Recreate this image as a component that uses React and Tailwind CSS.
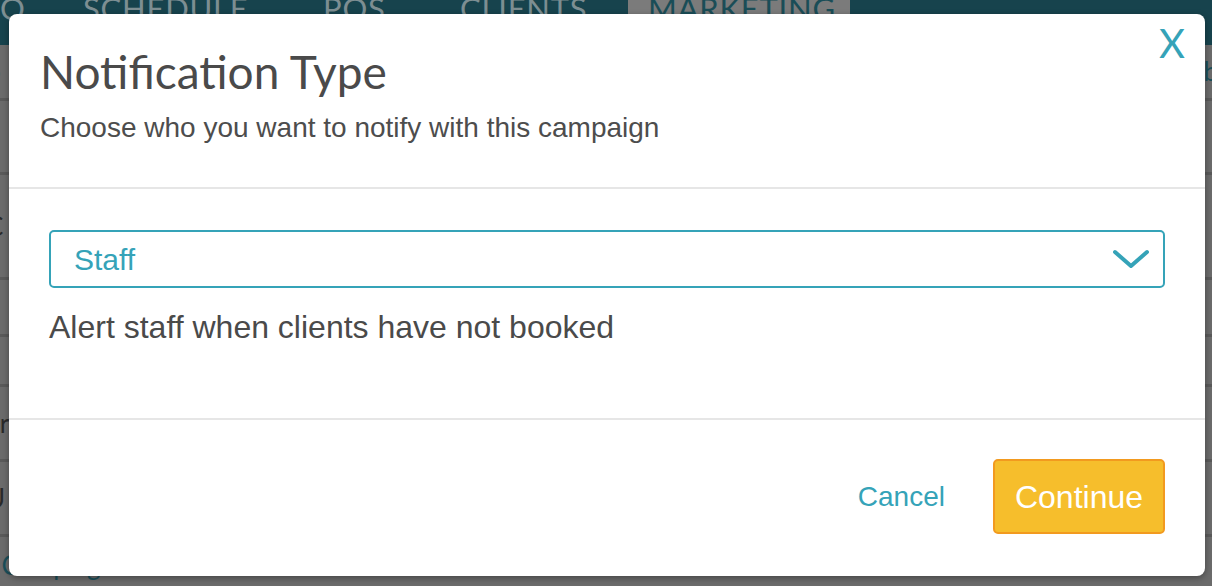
export default function App() {
  const rows = [
    { h: "h-[56px]", text: "o", cls: "text-[#1b4f5a]" },
    { h: "h-[74px]", text: "", cls: "" },
    { h: "h-[105px]", text: "C", cls: "text-[#2a2a2a]" },
    { h: "h-[57px]", text: "", cls: "" },
    { h: "h-[50px]", text: "", cls: "" },
    { h: "h-[75px]", text: "er", cls: "text-[#2a2a2a]" },
    { h: "h-[75px]", text: "U", cls: "text-[#2a2a2a]" },
    { h: "h-[60px]", text: "r Campaign", cls: "text-[#1b4f5a]" },
  ];

  return (
    <div className="relative h-[586px] w-[1212px] overflow-hidden bg-[#6b6b6b] font-['Liberation_Sans',Arial,sans-serif]">
      {/* page behind the dimmed overlay */}
      <div className="flex h-[45px] items-start bg-[#17434d]">
        <div className="-mt-[15px] flex items-start text-[31px] tracking-wide text-[#7d8e92] font-['Lato',sans-serif]">
          <span className="w-[83px] text-left">O</span>
          <span className="w-[240px]">SCHEDULE</span>
          <span className="w-[137px]">POS</span>
          <span className="w-[168px]">CLIENTS</span>
          <span className="h-[60px] w-[222px] bg-[#7b7b7b] px-[20px] text-[#1a4d57]">MARKETING</span>
        </div>
      </div>
      <div className="flex flex-col">
        {rows.map((r, i) => (
          <div
            key={i}
            className={`flex ${r.h} items-center justify-between border-b-[3px] border-[#5a5a5a] text-[26px] font-['Lato',sans-serif] ${r.cls}`}
          >
            <span className="-ml-[14px]">{r.text}</span>
            {i === 0 && <span className="-mr-[6px] text-[#1b4f5a]">b</span>}
          </div>
        ))}
      </div>

      {/* modal */}
      <div className="absolute left-[9px] top-[14px] flex h-[562px] w-[1196px] flex-col rounded-[8px] bg-white shadow-[0_2px_6px_rgba(0,0,0,0.35)]">
        <button className="absolute right-[20px] top-[9px] text-[40px] leading-none text-[#35a3b8] font-['Lato',sans-serif]">
          X
        </button>
        <div className="h-[175px] border-b-2 border-[#e6e6e6] px-[31px] pt-[30px]">
          <h1 className="text-[46px] leading-[56px] text-[#4a4a4a] font-['Lato',sans-serif]">
            Notification Type
          </h1>
          <p className="mt-[12px] text-[28px] leading-[32px] text-[#4d4d4d]">
            Choose who you want to notify with this campaign
          </p>
        </div>
        <div className="h-[231px] border-b-2 border-[#e6e6e6] px-[40px] pt-[41px]">
          <div className="flex h-[58px] items-center justify-between rounded-[5px] border-2 border-[#35a3b8] pl-[23px] pr-[13px]">
            <span className="text-[30px] text-[#35a3b8]">Staff</span>
            <svg width="38" height="22" viewBox="0 0 38 22" fill="none">
              <path d="M3 4 L19 18 L35 4" stroke="#35a3b8" strokeWidth="4" strokeLinecap="round" strokeLinejoin="round" />
            </svg>
          </div>
          <p className="mt-[20px] text-[32px] leading-[38px] text-[#4a4a4a]">
            Alert staff when clients have not booked
          </p>
        </div>
        <div className="flex flex-1 items-start justify-end gap-[48px] px-[40px] pt-[39px]">
          <button className="mt-[22px] text-[28px] leading-[32px] text-[#35a3b8]">Cancel</button>
          <button className="flex h-[75px] w-[172px] items-center justify-center rounded-[5px] border-2 border-[#f29a1f] bg-[#f6be2c] text-[32px] text-white">
            Continue
          </button>
        </div>
      </div>
    </div>
  );
}
